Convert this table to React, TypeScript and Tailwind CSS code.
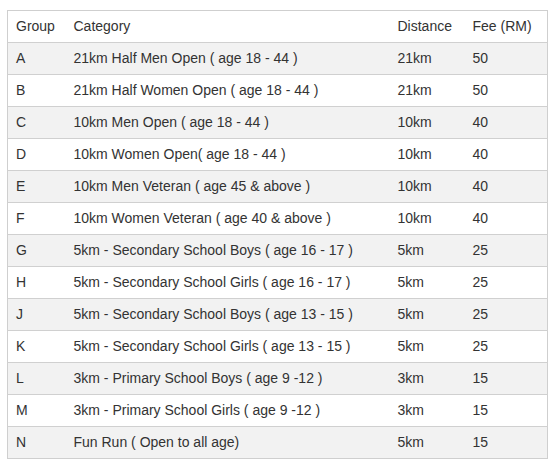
const rows: [string, string, string, string][] = [
  ["A", "21km Half Men Open ( age 18 - 44 )", "21km", "50"],
  ["B", "21km Half Women Open ( age 18 - 44 )", "21km", "50"],
  ["C", "10km Men Open ( age 18 - 44 )", "10km", "40"],
  ["D", "10km Women Open( age 18 - 44 )", "10km", "40"],
  ["E", "10km Men Veteran ( age 45 & above )", "10km", "40"],
  ["F", "10km Women Veteran ( age 40 & above )", "10km", "40"],
  ["G", "5km - Secondary School Boys ( age 16 - 17 )", "5km", "25"],
  ["H", "5km - Secondary School Girls ( age 16 - 17 )", "5km", "25"],
  ["J", "5km - Secondary School Boys ( age 13 - 15 )", "5km", "25"],
  ["K", "5km - Secondary School Girls ( age 13 - 15 )", "5km", "25"],
  ["L", "3km - Primary School Boys ( age 9 -12 )", "3km", "15"],
  ["M", "3km - Primary School Girls ( age 9 -12 )", "3km", "15"],
  ["N", "Fun Run ( Open to all age)", "5km", "15"],
];

export default function App() {
  return (
    <div className="bg-white pl-[7px] pt-[10px] font-['Liberation_Sans',Arial,sans-serif] text-[14px] text-[#333]">
      <table className="w-[540px] table-fixed border-collapse border border-[#cfcfcf]">
        <colgroup>
          <col className="w-[58px]" />
          <col className="w-[324px]" />
          <col className="w-[75px]" />
          <col className="w-[83px]" />
        </colgroup>
        <thead>
          <tr className="h-[32px] bg-white">
            <th className="px-2 text-left font-normal">Group</th>
            <th className="px-2 text-left font-normal">Category</th>
            <th className="px-2 text-left font-normal">Distance</th>
            <th className="px-2 text-left font-normal">Fee (RM)</th>
          </tr>
        </thead>
        <tbody>
          {rows.map((r, i) => (
            <tr
              key={r[0]}
              className={`h-[32px] border-t border-[#d0d0d0] ${i % 2 === 0 ? "bg-[#f2f2f2]" : "bg-white"}`}
            >
              {r.map((c, j) => (
                <td key={j} className="px-2 whitespace-nowrap">
                  {c}
                </td>
              ))}
            </tr>
          ))}
        </tbody>
      </table>
    </div>
  );
}
